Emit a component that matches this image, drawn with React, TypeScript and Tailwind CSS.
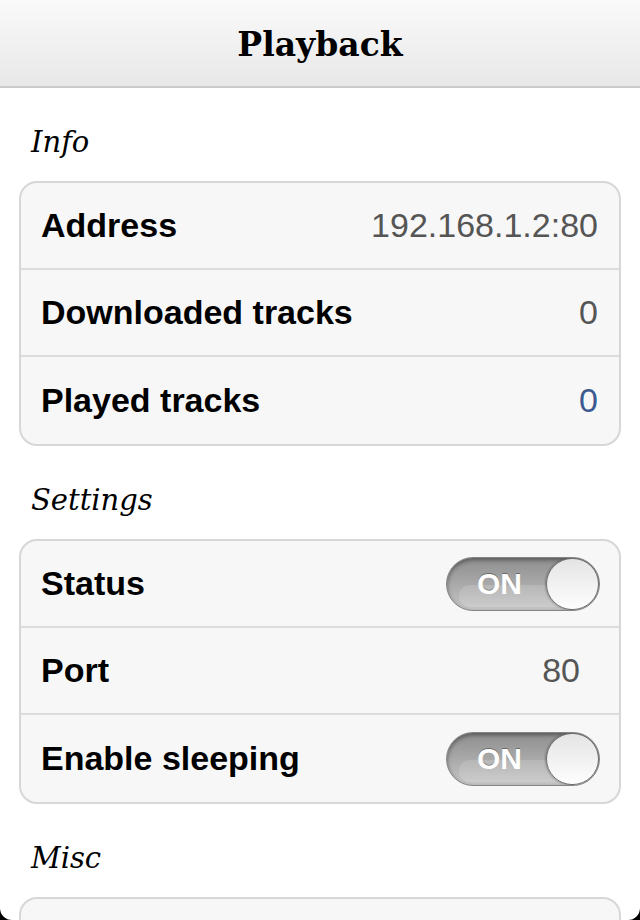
import React from "react";

const sans = { fontFamily: '"Liberation Sans", Arial, sans-serif' };
const serif = { fontFamily: '"DejaVu Serif", Georgia, serif' };

function Toggle() {
  return (
    <div className="relative h-[54px] w-[154px] overflow-hidden rounded-full border border-[#858585] bg-gradient-to-b from-[#8e8e8e] via-[#a9a9a9] to-[#c6c6c6] shadow-[inset_0_2px_4px_rgba(0,0,0,0.4)]">
      <div className="absolute bottom-[3px] left-[12px] h-[22px] w-[110px] rounded-full bg-white/15" />
      <span className="absolute left-[30px] top-[9px] text-[30px] font-bold leading-[34px] text-white [text-shadow:0_-1px_0_rgba(0,0,0,0.35)]" style={sans}>
        ON
      </span>
      <div className="absolute right-0 top-0 h-[52px] w-[53px] rounded-full border border-[#6f6f6f] bg-gradient-to-b from-[#e4e4e4] to-[#fefefe] shadow-[-1px_0_2px_rgba(0,0,0,0.25)]" />
    </div>
  );
}

function Row({ label, children, last }: { label: string; children?: React.ReactNode; last?: boolean }) {
  return (
    <div className={"flex h-[87px] items-center justify-between pl-[20px] pr-[19px] " + (last ? "" : "border-b-2 border-[#dcdcdc]")}>
      <span className="text-[34px] font-bold text-black" style={sans}>{label}</span>
      {children}
    </div>
  );
}

function Value({ children, blue, inset }: { children: React.ReactNode; blue?: boolean; inset?: boolean }) {
  return (
    <span className={"text-[34px] " + (blue ? "text-[#3b5a8f]" : "text-[#555555]") + (inset ? " pr-[20px]" : " pr-[2px]")} style={sans}>
      {children}
    </span>
  );
}

function Heading({ children }: { children: React.ReactNode }) {
  return (
    <h2 className="px-[31px] pb-[24px] pt-[39px] text-[29px] italic leading-[30px] text-black" style={serif}>
      {children}
    </h2>
  );
}

export default function App() {
  return (
    <div className="h-[920px] w-[640px] bg-black">
      <div className="h-full overflow-hidden rounded-b-[12px] bg-white">
        <header className="flex h-[88px] items-center justify-center border-b-2 border-[#cbcbcb] bg-gradient-to-b from-[#fafafa] to-[#e8e8e8] pt-[4px]">
          <h1 className="text-[33px] font-bold text-black" style={serif}>Playback</h1>
        </header>

        <Heading>Info</Heading>
        <div className="mx-[19px] rounded-[18px] border-2 border-[#d7d7d7] bg-[#f7f7f7]">
          <Row label="Address">
            <Value>192.168.1.2:80</Value>
          </Row>
          <Row label="Downloaded tracks">
            <Value>0</Value>
          </Row>
          <Row label="Played tracks" last>
            <Value blue>0</Value>
          </Row>
        </div>

        <Heading>Settings</Heading>
        <div className="mx-[19px] rounded-[18px] border-2 border-[#d7d7d7] bg-[#f7f7f7]">
          <Row label="Status">
            <Toggle />
          </Row>
          <Row label="Port">
            <Value inset>80</Value>
          </Row>
          <Row label="Enable sleeping" last>
            <Toggle />
          </Row>
        </div>

        <Heading>Misc</Heading>
        <div className="mx-[19px] h-[100px] rounded-[18px] border-2 border-[#d7d7d7] bg-[#f7f7f7]" />
      </div>
    </div>
  );
}
